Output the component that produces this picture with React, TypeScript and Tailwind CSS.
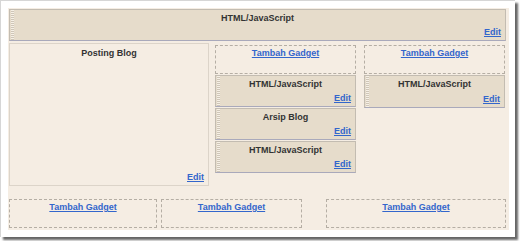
import React from "react";

const grip =
  "absolute left-[1px] top-0 bottom-0 w-[3px] bg-[repeating-linear-gradient(to_bottom,#f6f0e6_0px,#f6f0e6_1px,#cfc6b8_1px,#cfc6b8_2px)]";

function EditLink() {
  return (
    <div className="text-right pr-[4px]">
      <a className="font-bold text-[#3366cc] underline cursor-pointer">Edit</a>
    </div>
  );
}

function Gadget({ title, cls }: { title: string; cls: string }) {
  return (
    <div
      className={`relative flex flex-col justify-between border border-[#c3bcb1] border-b-[#a9a9bb] bg-[#e6dccb] pt-[3px] pb-[2px] ${cls}`}
    >
      <div className={grip} />
      <div className="text-center font-bold text-[#333333]">{title}</div>
      <EditLink />
    </div>
  );
}

function AddGadget({ cls }: { cls: string }) {
  return (
    <div className={`border border-dashed border-[#b5aea4] pt-[2px] text-center ${cls}`}>
      <a className="font-bold text-[#3366cc] underline cursor-pointer">Tambah Gadget</a>
    </div>
  );
}

export default function App() {
  return (
    <div
      className="w-[520px] h-[241px] bg-white overflow-hidden text-[9px] leading-[11px]"
      style={{ fontFamily: '"Liberation Sans", Arial, sans-serif' }}
    >
      <div className="w-[515px] h-[237px] bg-white border-t border-l border-[#d6d6d6] shadow-[3px_3px_2px_rgba(0,0,0,0.6)] pt-[7px] pl-[7px]">
        <div className="w-[501px] h-[222px] bg-[#f5ede3] pt-[1px] pl-[1px] flex flex-col">
          <Gadget title="HTML/JavaScript" cls="w-[497px] h-[32px]" />
          <div className="flex mt-[2px] h-[143px]">
            <div className="w-[200px] h-[143px] border border-[#dcd4c9] flex flex-col justify-between pt-[4px] pb-[2px]">
              <div className="text-center font-bold text-[#333333]">Posting Blog</div>
              <EditLink />
            </div>
            <div className="ml-[6px] w-[141px] pt-[2px] flex flex-col gap-[1px]">
              <AddGadget cls="h-[29px]" />
              <Gadget title="HTML/JavaScript" cls="h-[32px]" />
              <Gadget title="Arsip Blog" cls="h-[32px]" />
              <Gadget title="HTML/JavaScript" cls="h-[32px]" />
            </div>
            <div className="ml-[8px] w-[141px] pt-[2px] flex flex-col gap-[1px]">
              <AddGadget cls="h-[29px]" />
              <Gadget title="HTML/JavaScript" cls="h-[33px]" />
            </div>
          </div>
          <div className="flex mt-[13px]">
            <AddGadget cls="w-[148px] h-[29px]" />
            <AddGadget cls="ml-[4px] w-[141px] h-[29px]" />
            <AddGadget cls="ml-[24px] w-[180px] h-[29px]" />
          </div>
        </div>
      </div>
    </div>
  );
}
